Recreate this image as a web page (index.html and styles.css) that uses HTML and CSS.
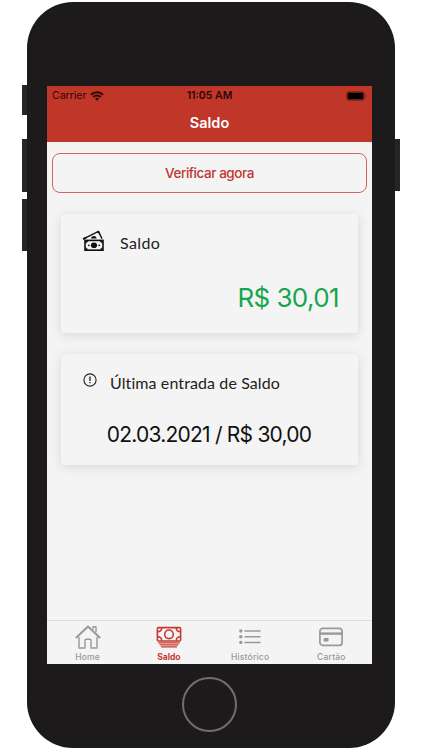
FILE: index.html
```html
<!DOCTYPE html>
<html lang="pt-BR">
<head>
	<meta charset="utf-8">
	<title>Saldo</title>
	<link rel="stylesheet" href="styles.css">
</head>
<body>
	<div class="phone">
		<span class="side-button mute"></span>
		<span class="side-button volume-up"></span>
		<span class="side-button volume-down"></span>
		<span class="side-button power"></span>

		<div class="screen">
			<header class="header">
				<div class="status-bar">
					<span class="carrier">Carrier
						<svg class="wifi" viewBox="0 0 14 10" fill="none" stroke="currentColor" stroke-width="1.9">
							<path d="M1 3.7a8.6 8.6 0 0 1 12 0M3.2 6a5.4 5.4 0 0 1 7.6 0"/>
							<path d="M7 9.8 5 7.8a2.9 2.9 0 0 1 4 0z" fill="currentColor" stroke="none"/>
						</svg>
					</span>
					<span class="time">11:05 AM</span>
					<svg class="battery" viewBox="0 0 21 10">
						<rect x="0.5" y="0.5" width="18" height="9" rx="2.5" fill="#8d241b" stroke="#8d241b"/>
						<rect x="1.7" y="1.7" width="15.6" height="6.6" rx="1.2" fill="#000"/>
						<path d="M19.6 3.5v3q1.2-.3 1.2-1.5t-1.2-1.5z" fill="#8d241b"/>
					</svg>
				</div>
				<h1>Saldo</h1>
			</header>

			<main>
				<button class="check-button">Verificar agora</button>

				<section class="card balance">
					<div class="card-title">
						<svg class="icon-cash" viewBox="0 0 22 21">
							<path d="M1 9.2 16.4 1.4 20 8.6" fill="none" stroke="#111" stroke-width="1.4"/>
							<path d="M14.3 1.9 17 1l1.6 3.4zM.8 8.2l3-1.4.8 1.4-3 1.8z" fill="#111"/>
							<path d="M8.9 8.4c.4-2.2 3.9-3.2 5.3-1.2l.5 1.2z" fill="#111"/>
							<rect x="3" y="10.4" width="18" height="9.8" fill="#f4f4f4" stroke="#111" stroke-width="1.6"/>
							<path d="M3.5 10.9h3l-3 2.8zM20.5 10.9h-3l3 2.8zM3.5 19.7h3l-3-2.8zM20.5 19.7h-3l3-2.8z" fill="#111"/>
							<ellipse cx="12" cy="15.3" rx="3.1" ry="2.8" fill="#111"/>
							<circle cx="6.8" cy="15.3" r=".9" fill="#111"/>
							<circle cx="17.2" cy="15.3" r=".9" fill="#111"/>
						</svg>
						<h2>Saldo</h2>
					</div>
					<p class="amount">R$ 30,01</p>
				</section>

				<section class="card last-entry">
					<div class="card-title">
						<svg class="icon-alert" viewBox="0 0 14 14" fill="none" stroke="#222">
							<circle cx="7" cy="7" r="6.1" stroke-width="1.1"/>
							<path d="M7 3.5v4.4M7 9v1.3" stroke-width="1.3"/>
						</svg>
						<h2>Última entrada de Saldo</h2>
					</div>
					<p class="entry">02.03.2021 / R$ 30,00</p>
				</section>
			</main>

			<nav class="tabs">
				<a class="tab">
					<svg viewBox="0 0 26 26" fill="none" stroke="currentColor" stroke-width="1.4" stroke-linejoin="round">
						<path d="M18 5.4V2.8h3v5.4"/>
						<path d="M1.4 13.4 13 2.6l11.6 10.8" stroke-width="2" stroke-linecap="round"/>
						<path d="M4 13v11h6v-7.6q0-1.2 1.2-1.2h3.6q1.2 0 1.2 1.2V24h6V13"/>
					</svg>
					<span>Home</span>
				</a>
				<a class="tab active">
					<svg viewBox="0 0 26 26" fill="none" stroke="currentColor" stroke-width="1.6">
						<rect x="1.4" y="3.6" width="23.2" height="13.4" rx="1"/>
						<circle cx="13" cy="10.3" r="4.3"/>
						<path d="M1.5 7.8q4.2 0 4.2-4M24.5 7.8q-4.2 0-4.2-4M1.5 12.8q4.2 0 4.2 4M24.5 12.8q-4.2 0-4.2 4"/>
						<path d="M2.3 18.9h21.4M3.6 20.9h18.8M5 22.8h16" stroke-width="1.3"/>
					</svg>
					<span>Saldo</span>
				</a>
				<a class="tab">
					<svg viewBox="0 0 26 26" fill="none" stroke="currentColor" stroke-width="1.5" stroke-linecap="round">
						<path d="M8 7h15M8 12.7h15M8 18.4h15"/>
						<path d="M3.8 7h.01M3.8 12.7h.01M3.8 18.4h.01" stroke-width="3.4"/>
					</svg>
					<span>Histórico</span>
				</a>
				<a class="tab">
					<svg viewBox="0 0 26 26" fill="none" stroke="currentColor" stroke-width="1.7">
						<rect x="1.9" y="4.4" width="22.2" height="17" rx="3"/>
						<path d="M1.9 9.6h22.2" stroke-width="2.4"/>
						<rect x="5.6" y="14" width="5" height="3.6" rx="1" fill="currentColor" stroke="none"/>
					</svg>
					<span>Cartão</span>
				</a>
			</nav>
		</div>

		<div class="home-button"></div>
	</div>
</body>
</html>
```

FILE: styles.css
```css
body {
	margin: 0;
	height: 750px;
	overflow: hidden;
	background-color: #fff;
	font-family: Inter, "Liberation Sans", sans-serif;
}

h1, h2, p {
	margin: 0;
	font-weight: normal;
}

svg {
	display: block;
	flex: none;
}

.phone {
	position: relative;
	box-sizing: border-box;
	width: 368px;
	height: 746px;
	margin: 2px 0 0 27px;
	padding: 84px 23px 0 20px;
	background-color: #1c1a1b;
	border-radius: 46px;
}

.side-button {
	position: absolute;
	left: -5px;
	width: 5px;
	background-color: #252525;
}

.mute {
	top: 83px;
	height: 30px;
}

.volume-up {
	top: 137px;
	height: 53px;
}

.volume-down {
	top: 197px;
	height: 52px;
}

.power {
	left: auto;
	right: -5px;
	top: 137px;
	height: 52px;
}

.screen {
	display: flex;
	flex-direction: column;
	height: 578px;
	background-color: #f4f4f4;
}

.header {
	height: 56px;
	background-color: #c0372a;
	text-align: center;
}

.status-bar {
	display: grid;
	grid-template-columns: 1fr auto 1fr;
	align-items: center;
	height: 19px;
	padding: 0 5px;
	font-size: 10.5px;
	color: #2b0805;
}

.carrier {
	display: flex;
	align-items: center;
	gap: 4px;
}

.wifi {
	width: 14px;
	height: 10px;
}

.time {
	font-weight: 600;
}

.battery {
	width: 21px;
	height: 10px;
	justify-self: end;
}

.header h1 {
	font-size: 14.5px;
	line-height: 36px;
	font-weight: 600;
	color: #fff;
}

main {
	flex: 1;
	padding: 11px 5px 0;
}

.check-button {
	display: block;
	width: 100%;
	height: 40px;
	padding: 0;
	border: 1px solid #d2655d;
	border-radius: 8px;
	background: none;
	font-family: inherit;
	font-size: 13.5px;
	font-weight: 500;
	letter-spacing: -0.45px;
	color: #c0372f;
}

.card {
	box-sizing: border-box;
	margin: 0 9px;
	padding: 0 19px 0 21px;
	background-color: #f4f4f4;
	border-radius: 4px;
	box-shadow: 0 2px 12px rgba(0, 0, 0, 0.12);
}

.balance {
	height: 119px;
	margin-top: 21px;
	padding-top: 16px;
}

.last-entry {
	height: 111px;
	margin-top: 21px;
	padding-top: 17px;
}

.card-title {
	display: flex;
}

.card-title h2 {
	font-family: Lato, sans-serif;
	font-size: 16px;
	line-height: 24px;
	font-variant-ligatures: none;
	letter-spacing: 0.1px;
	color: #222;
}

.balance h2 {
	padding-top: 1px;
	letter-spacing: 0.4px;
}

.icon-cash {
	width: 22px;
	height: 21px;
	margin-right: 16px;
}

.icon-alert {
	width: 14px;
	height: 14px;
	margin: 2px 13px 0 1px;
}

.amount {
	margin-top: 26px;
	text-align: right;
	font-size: 26px;
	line-height: 34px;
	letter-spacing: -0.6px;
	color: #16a64e;
}

.entry {
	margin-top: 25px;
	padding-right: 3px;
	text-align: center;
	font-size: 21px;
	line-height: 30px;
	letter-spacing: -0.78px;
	color: #111;
}

.tabs {
	display: grid;
	grid-template-columns: repeat(4, 1fr);
	box-sizing: border-box;
	height: 44px;
	border-top: 1px solid #dedede;
}

.tab {
	display: flex;
	flex-direction: column;
	align-items: center;
	padding-top: 3px;
	font-size: 8.5px;
	font-weight: 500;
	line-height: 14px;
	letter-spacing: 0.2px;
	color: #999;
}

.tab svg {
	width: 26px;
	height: 26px;
}

.active {
	color: #c8382f;
	font-weight: 700;
	letter-spacing: 0;
}

.home-button {
	box-sizing: border-box;
	width: 55px;
	height: 55px;
	margin: 13px auto 0;
	border: 2px solid #706e6f;
	border-radius: 50%;
}
```
